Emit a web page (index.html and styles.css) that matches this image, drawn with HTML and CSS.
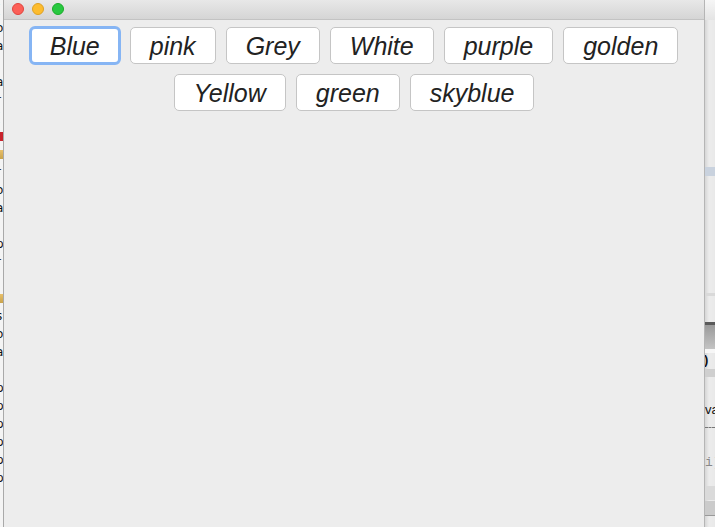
FILE: index.html
```html
<!DOCTYPE html>
<html>
<head>
<meta charset="utf-8">
<link rel="stylesheet" href="styles.css">
</head>
<body>
<div class="screen">
  <div class="behind-left">
    <div class="bl-lines">
      <div>(</div><div>o</div><div>a</div><div>j</div><div>a</div><div>r</div><div>[</div>
      <div class="bl-icon red"></div><div class="bl-icon"></div>
      <div>r</div><div>o</div><div>a</div><div>j</div><div>p</div><div>r</div><div>.</div>
      <div class="bl-icon"></div>
      <div>s</div><div>o</div><div>a</div><div>j</div><div>p</div><div>p</div><div>p</div><div>p</div><div>p</div><div>p</div>
    </div>
  </div>
  <div class="window">
    <div class="titlebar">
      <span class="light close"></span>
      <span class="light min"></span>
      <span class="light max"></span>
    </div>
    <div class="content">
      <div class="row">
        <button class="btn focused">Blue</button>
        <button class="btn">pink</button>
        <button class="btn">Grey</button>
        <button class="btn">White</button>
        <button class="btn">purple</button>
        <button class="btn">golden</button>
      </div>
      <div class="row">
        <button class="btn">Yellow</button>
        <button class="btn">green</button>
        <button class="btn">skyblue</button>
      </div>
    </div>
  </div>
  <div class="behind-right">
    <div class="br-top"></div>
    <div class="br-space s1"></div>
    <div class="br-blue"></div>
    <div class="br-space s2"></div>
    <div class="br-line"></div>
    <div class="br-space s3"></div>
    <div class="br-dark"></div>
    <div class="br-gray"></div>
    <div class="br-white"></div>
    <div class="br-text bold">)</div>
    <div class="br-band"></div>
    <div class="br-space s4"></div>
    <div class="br-text">va</div>
    <div class="br-dash"></div>
    <div class="br-space s5"></div>
    <div class="br-text mono">i)</div>
    <div class="br-space s6"></div>
    <div class="br-band b2"></div>
    <div class="br-band b3"></div>
  </div>
</div>
</body>
</html>
```

FILE: styles.css
```css
html, body {
  margin: 0;
  padding: 0;
  background: #e6e6e6;
}
.screen {
  width: 715px;
  height: 527px;
  overflow: hidden;
  display: flex;
  flex-direction: row;
}
.behind-left {
  width: 3px;
  flex: none;
  background: #f4f4f4;
  overflow: hidden;
  border-right: 1px solid #a9a9a9;
}
.bl-lines {
  margin-left: -4px;
  padding-top: 1px;
  font-family: "DejaVu Sans", sans-serif;
  font-size: 12px;
  line-height: 18px;
  color: #111;
}
.bl-lines div {
  height: 18px;
}
.bl-icon {
  width: 12px;
  background: linear-gradient(#e9c06a, #c9a34c);
  border-top: 5px solid #f4f4f4;
  border-bottom: 4px solid #f4f4f4;
  box-sizing: border-box;
}
.bl-icon.red {
  background: #c8232c;
}
.window {
  width: 700px;
  flex: none;
  display: flex;
  flex-direction: column;
  background: #ededed;
  border-right: 1px solid #b5b5b5;
}
.titlebar {
  height: 19px;
  flex: none;
  background: linear-gradient(#e8e8e8, #d5d5d5);
  border-bottom: 1px solid #c3c3c3;
  display: flex;
  align-items: center;
  padding-left: 8px;
  gap: 8px;
}
.light {
  width: 12px;
  height: 12px;
  border-radius: 50%;
  box-sizing: border-box;
  margin-top: -1px;
}
.close { background: #fc5f57; border: 1px solid #e0443e; }
.min { background: #fdbc2e; border: 1px solid #dea123; }
.max { background: #28c840; border: 1px solid #1aab29; }
.content {
  flex: 1;
  padding-top: 7px;
  display: flex;
  flex-direction: column;
  gap: 10px;
}
.row {
  display: flex;
  justify-content: center;
  align-items: center;
  gap: 10px;
}
.btn {
  font-family: "Liberation Sans", Arial, sans-serif;
  font-style: italic;
  font-size: 25px;
  color: #222;
  background: #ffffff;
  border: 1px solid #c5c5c5;
  border-radius: 5px;
  height: 37px;
  padding: 1px 19px 0;
  margin: 0;
  box-sizing: border-box;
  line-height: 1;
}
.btn.focused {
  border: 3px solid #86b5f4;
  border-radius: 6px;
  padding: 1px 18px 0;
  height: 39px;
  margin: -1px;
}
.behind-right {
  flex: 1;
  display: flex;
  flex-direction: column;
  background: linear-gradient(90deg, #d6d6d6, #ececec 4px, #e9e9e9);
  font-family: "Liberation Sans", Arial, sans-serif;
  font-size: 13px;
  color: #111;
  overflow: hidden;
}
.br-top { height: 20px; background: linear-gradient(#f6f6f6, #e4e4e4); flex: none; }
.s1 { height: 147px; flex: none; }
.br-blue { height: 9px; background: #c9d2de; flex: none; }
.s2 { height: 117px; flex: none; }
.br-line { height: 3px; background: #d9d9d9; flex: none; }
.s3 { height: 26px; flex: none; }
.br-dark { height: 3px; background: #5a5a5a; flex: none; }
.br-gray { height: 24px; background: linear-gradient(#9a9a9a, #c4c4c4); flex: none; }
.br-white { height: 4px; background: #f7f7f7; flex: none; }
.br-text { height: 14px; line-height: 14px; white-space: nowrap; flex: none; }
.br-text.bold { font-weight: bold; margin-left: -1px; }
.br-band { height: 8px; background: #cfcfcf; flex: none; margin-top: 2px; }
.s4 { height: 26px; flex: none; }
.br-dash { height: 0; border-top: 1px dashed #777; margin-top: 10px; flex: none; }
.s5 { height: 28px; flex: none; }
.br-text.mono { font-family: "Liberation Mono", monospace; color: #888; margin-left: 0; }
.s6 { height: 14px; flex: none; }
.br-band.b2 { height: 14px; background: #dadada; }
.br-band.b3 { height: 14px; background: #cbcbcb; margin-top: 1px; border-bottom: 1px solid #999; }
```
